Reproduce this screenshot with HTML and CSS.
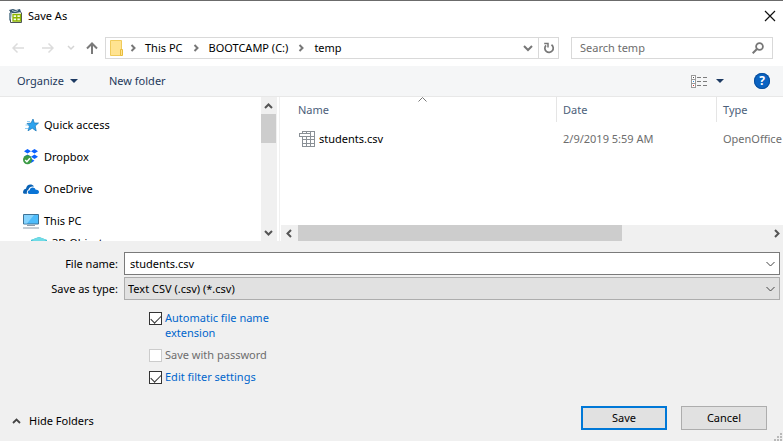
FILE: index.html
```html
<!DOCTYPE html>
<html lang="en">
<head>
<meta charset="utf-8">
<title>Save As</title>
<link rel="stylesheet" href="styles.css">
</head>
<body>
<main class="dialog">
  <header class="titlebar">
    <svg class="app-icon" width="16" height="16" viewBox="0 0 16 16" aria-hidden="true">
      <path d="M2.500 3.500h9.500l1.500 1.500v9.500h-11z" fill="#fff" stroke="#4c5357"/>
      <path d="M1 2l4-1 3 1 4-1 1 3-5 1-5 0z" fill="#33556d"/>
      <path d="M4 2.500l3 1 3-1" fill="none" stroke="#b9cbd6"/>
      <path d="M1 5l3-1-1 7-2 2z" fill="#7d96a5"/>
      <path d="M5 6.500h7.500v6.500H5zM8.750 6.500v6.500M5 9.750h7.500" fill="#f7fce4" stroke="#8db500" stroke-width="1.300"/>
    </svg>
    <h1 class="title">Save As</h1>
    <button class="close" type="button" aria-label="Close">
      <svg width="12" height="12" viewBox="0 0 12 12"><path d="M1 1l10 10M11 1L1 11" fill="none" stroke="#111" stroke-width="1.200"/></svg>
    </button>
  </header>

  <div class="navbar">
    <div class="history">
      <button type="button" class="nav-btn" aria-label="Back" disabled>
        <svg width="12" height="12" viewBox="0 0 12 12"><path d="M12 6H1M5.500 1.500L1 6l4.500 4.500" fill="none" stroke="#dcdcdc" stroke-width="1.500"/></svg>
      </button>
      <button type="button" class="nav-btn" aria-label="Forward" disabled>
        <svg width="12" height="12" viewBox="0 0 12 12"><path d="M0 6h11M6.500 1.500L11 6l-4.500 4.500" fill="none" stroke="#dcdcdc" stroke-width="1.500"/></svg>
      </button>
      <button type="button" class="nav-btn recent" aria-label="Recent locations" disabled>
        <svg width="8" height="6" viewBox="0 0 8 6"><path d="M1 1l3 3 3-3" fill="none" stroke="#d4d4d4" stroke-width="1.500"/></svg>
      </button>
      <button type="button" class="nav-btn" aria-label="Up">
        <svg width="12" height="12" viewBox="0 0 12 12"><path d="M6 12V1.500M1 6.500l5-5 5 5" fill="none" stroke="#7a7a7a" stroke-width="2"/></svg>
      </button>
    </div>
    <div class="address">
      <svg class="folder" width="14" height="16" viewBox="0 0 14 16" aria-hidden="true">
        <path d="M.5.5h11v15h-11z" fill="#ffe391" stroke="#f0cb5b"/>
        <path d="M10.500 9.500h2v6h-2z" fill="#ffe391" stroke="#e9bd3c"/>
      </svg>
      <svg class="sep" width="6" height="8" viewBox="0 0 6 8"><path d="M1.500 1l3 3-3 3" /></svg>
      <a href="#pc">This PC</a>
      <svg class="sep" width="6" height="8" viewBox="0 0 6 8"><path d="M1.500 1l3 3-3 3" /></svg>
      <a href="#c">BOOTCAMP (C:)</a>
      <svg class="sep" width="6" height="8" viewBox="0 0 6 8"><path d="M1.500 1l3 3-3 3" /></svg>
      <a href="#temp">temp</a>
      <button type="button" class="addr-btn drop" aria-label="Previous locations">
        <svg width="10" height="7" viewBox="0 0 10 7"><path d="M1 1l4 4 4-4" fill="none" stroke="#777" stroke-width="2"/></svg>
      </button>
      <button type="button" class="addr-btn refresh" aria-label="Refresh">
        <svg width="12" height="12" viewBox="0 0 12 12"><path d="M8.500 2.800A4.200 4.200 0 1 1 3 3.300" fill="none" stroke="#777" stroke-width="1.700"/><path d="M1.200 1.500H5V5.500" fill="none" stroke="#777" stroke-width="1.500"/></svg>
      </button>
    </div>
    <div class="search">
      <input type="text" placeholder="Search temp" aria-label="Search temp">
      <svg width="12" height="12" viewBox="0 0 12 12" aria-hidden="true"><circle cx="7.500" cy="4.500" r="3.400" fill="none" stroke="#777" stroke-width="1.800"/><path d="M5 7L.7 11.300" stroke="#777" stroke-width="2"/></svg>
    </div>
  </div>

  <div class="toolbar">
    <button type="button" class="tool">Organize
      <svg width="8" height="4" viewBox="0 0 8 4"><path d="M0 0h8L4 4z" fill="#1d3a63"/></svg>
    </button>
    <button type="button" class="tool">New folder</button>
    <button type="button" class="tool view" aria-label="Change view">
      <svg width="16" height="13" viewBox="0 0 16 13" shape-rendering="crispEdges">
        <path d="M.5.500h4v12h-4zM.5 4.500h4M.5 8.500h4" fill="#fff" stroke="#9a9a9a"/>
        <path d="M2 2h1v1H2z" fill="#555"/><path d="M2 6h1v1H2z" fill="#2f8fe0"/><path d="M2 10h1v1H2z" fill="#c33"/>
        <path d="M6 2.500h4M12 2.500h4M6 6.500h4M12 6.500h4M6 10.500h4M12 10.500h4" stroke="#7c7c7c"/>
      </svg>
      <svg width="8" height="4" viewBox="0 0 8 4"><path d="M0 0h8L4 4z" fill="#1d3a63"/></svg>
    </button>
    <button type="button" class="help" aria-label="Help">?</button>
  </div>

  <div class="browser">
    <nav class="places">
      <a href="#quick">
        <svg width="16" height="16" viewBox="0 0 16 16"><path d="M10 2l1.300 4H15.500l-3.300 3 1 5-3.900-2.800L5 13.800l1.400-4.600L4 6.500l4-.4z" fill="#2ea3ee" stroke="#1976b8" stroke-width=".7"/><path d="M4 4.500h3M2.500 8h3M2 11.500h3" stroke="#8fcdf5"/></svg>
        Quick access</a>
      <a href="#dropbox">
        <svg width="16" height="16" viewBox="0 0 16 16"><path d="M4.500 0L8 2.200 4.500 4.500 1 2.200zM11.500 0L15 2.200l-3.500 2.300L8 2.200zM4.500 5.500L8 7.700 4.500 10 1 7.700zM11.500 5.500L15 7.700 11.500 10 8 7.700zM8 9.500l3.500 2.200L8 14z" fill="#0a62ff"/><circle cx="4.500" cy="10.800" r="4.500" fill="#3b9b45"/><path d="M2.200 11l1.700 1.700 3-3.500" fill="none" stroke="#fff" stroke-width="1.500"/></svg>
        Dropbox</a>
      <a href="#onedrive">
        <svg width="16" height="16" viewBox="0 0 16 16"><path d="M0 11.500C0 9 1.500 8 3 7.700 3.500 3.500 8.500 2 11 5.500 7.500 5 6 6.500 5.500 8.500 4 9 3.500 11 4 12.800H2C.8 12.800 0 12.500 0 11.500z" fill="#0a62b5"/><path d="M6.500 13C4 12.500 4.300 9.500 6.700 9.300 7 6 11.500 5.500 12.700 8.700 15 8.400 16 9.500 16 11c0 1.300-1 2-2 2z" fill="#0a74d6"/></svg>
        OneDrive</a>
      <a href="#thispc">
        <svg width="16" height="16" viewBox="0 0 16 16"><path d="M.5 1.500h15v9.500h-15z" fill="#4dbcfb" stroke="#3f7396"/><path d="M1 2h10L4 10.500H1z" fill="#86d3fd"/><path d="M4 12.500h8M0 15h16" stroke="#8d9caa"/></svg>
        This PC</a>
      <a href="#objects" class="child">
        <svg width="16" height="16" viewBox="0 0 16 16"><path d="M8 0l8 3v9l-8 4-8-4V3z" fill="#35b6cb"/><path d="M8 0l8 3-8 3-8-3z" fill="#6fdbe6"/></svg>
        3D Objects</a>
    </nav>
    <div class="vscroll" aria-hidden="true">
      <svg width="9" height="6" viewBox="0 0 9 6"><path d="M1 5l3.500-3.500L8 5"/></svg>
      <div class="vthumb"></div>
      <svg class="end" width="9" height="6" viewBox="0 0 9 6"><path d="M1 1l3.500 3.500L8 1"/></svg>
    </div>
    <section class="files">
      <div class="list">
        <table>
          <colgroup><col class="c-name"><col class="c-date"><col></colgroup>
          <thead><tr>
            <th>Name<svg class="sort" width="9" height="5" viewBox="0 0 9 5"><path d="M.5 4.500l4-4 4 4" fill="none" stroke="#777"/></svg></th>
            <th>Date</th><th>Type</th>
          </tr></thead>
          <tbody><tr>
            <td class="name"><div class="file">
              <svg width="16" height="16" viewBox="0 0 16 16" shape-rendering="crispEdges"><path d="M3.500.5h12v15h-12zM7.500.5v15M11.500.5v15M3.500 5.500h12M3.500 8.500h12M3.500 12.500h12" fill="#fff" stroke="#8a9096"/><path d="M.5 2.500h11v3H.5z" fill="#fff" stroke="#8a9096"/></svg>
              students.csv</div></td>
            <td>2/9/2019 5:59 AM</td><td>OpenOffice</td>
          </tr></tbody>
        </table>
      </div>
      <div class="hscroll" aria-hidden="true">
        <svg width="6" height="9" viewBox="0 0 6 9"><path d="M5 1L1.500 4.500 5 8"/></svg>
        <div class="track"><div class="hthumb"></div></div>
        <svg width="6" height="9" viewBox="0 0 6 9"><path d="M1 1l3.500 3.500L1 8"/></svg>
      </div>
    </section>
  </div>

  <form class="form">
    <div class="fields">
      <label for="fname">File name:</label>
      <div class="combo">
        <input id="fname" type="text" value="students.csv">
        <svg width="9" height="6" viewBox="0 0 9 6"><path d="M.5 1l4 4 4-4"/></svg>
      </div>
      <label for="ftype">Save as type:</label>
      <div class="combo grey">
        <select id="ftype"><option>Text CSV (.csv) (*.csv)</option></select>
        <svg width="9" height="6" viewBox="0 0 9 6"><path d="M.5 1l4 4 4-4"/></svg>
      </div>
    </div>
    <div class="options">
      <label><input type="checkbox" checked><span>Automatic file name extension</span></label>
      <label class="off"><input type="checkbox" disabled><span>Save with password</span></label>
      <label><input type="checkbox" checked><span>Edit filter settings</span></label>
    </div>
    <footer class="footer">
      <button type="button" class="hide">
        <svg width="9" height="6" viewBox="0 0 9 6"><path d="M1 5l3.500-3.500L8 5" fill="none" stroke="#444" stroke-width="1.800"/></svg>
        Hide Folders
      </button>
      <button type="submit" class="push default">Save</button>
      <button type="button" class="push">Cancel</button>
    </footer>
    <svg class="grip" width="8" height="8" viewBox="0 0 8 8" aria-hidden="true"><path d="M6 0h2v2H6zM3 3h2v2H3zM6 3h2v2H6zM0 6h2v2H0zM3 6h2v2H3zM6 6h2v2H6z" fill="#b9b9b9"/></svg>
  </form>
</main>
</body>
</html>
```
FILE: styles.css
```css
* { box-sizing: border-box; }

body {
  margin: 0;
  background: #fff;
  color: #000;
  font: 11px/16px "Segoe UI", "Noto Sans", "Open Sans", sans-serif;
}

button, input, select {
  margin: 0;
  padding: 0;
  border: 0;
  background: none;
  color: inherit;
  font: inherit;
}

a { color: inherit; text-decoration: none; }
svg { display: block; flex: none; }

.dialog {
  display: flex;
  flex-direction: column;
  min-height: 100vh;
  border-top: 1px solid #6b6b6b;
}

.titlebar {
  display: flex;
  align-items: center;
  height: 29px;
  padding: 0 7px 0 8px;
}
.title { flex: 1; margin: 0 0 0 4px; font-size: 11px; font-weight: 400; }

.navbar {
  display: flex;
  align-items: center;
  height: 36px;
  padding: 0 10px 0 12px;
}
.history { display: flex; align-items: center; width: 93px; }
.nav-btn { margin-right: 18px; }
.nav-btn:nth-child(2) { margin-right: 13px; }
.nav-btn.recent { margin-right: 11px; }
.nav-btn:last-child { margin-right: 0; }

.address, .search {
  display: flex;
  align-items: center;
  height: 22px;
  border: 1px solid #d9d9d9;
}
.address { flex: 1; min-width: 0; padding-left: 4px; }
.folder { margin-right: 6px; }
.sep { margin: 0 10px; }
.folder + .sep { margin-left: 0; margin-right: 9px; }
.sep path { fill: none; stroke: #777; stroke-width: 2; }
.addr-btn { display: flex; align-items: center; justify-content: center; width: 20px; height: 20px; }
.drop { margin-left: auto; }
.refresh { border-left: 1px solid #d9d9d9; }

.search { width: 202px; margin-left: 12px; padding: 0 8px; }
.search input { flex: 1; min-width: 0; outline: 0; }
.search input::placeholder { color: #6d6d6d; opacity: 1; }

.toolbar {
  display: flex;
  align-items: center;
  height: 31px;
  padding: 0 13px 0 17px;
  border-bottom: 1px solid #e8e8e8;
  background: #f5f6f7;
  color: #1e395b;
}
.tool { display: flex; align-items: center; gap: 6px; margin-right: 31px; }
.view { gap: 9px; margin: 0 30px 0 auto; }
.help {
  width: 16px;
  height: 16px;
  border-radius: 50%;
  background: #0a63c2;
  box-shadow: 0 0 0 1px #0a4f9c inset;
  color: #fff;
  font-size: 12px;
  font-weight: 700;
  line-height: 16px;
}

.browser { display: flex; height: 144px; }
.places { width: 261px; padding: 12px 0 0 23px; overflow: hidden; }
.places a { display: flex; align-items: center; gap: 5px; height: 32px; }
.places a.child { align-items: flex-start; height: 16px; padding-left: 8px; line-height: 12px; }

.vscroll {
  display: flex;
  flex-direction: column;
  align-items: center;
  width: 16px;
  padding: 6px 1px 5px 0;
  background: #f0f0f0;
}
.vscroll path, .hscroll path { fill: none; stroke: #555; stroke-width: 2; }
.vthumb { width: 15px; height: 29px; margin-top: 5px; background: #cdcdcd; }
.vscroll .end { margin-top: auto; }

.files {
  display: flex;
  flex: 1;
  flex-direction: column;
  min-width: 0;
  margin-left: 2px;
  border-left: 1px solid #f0f0f0;
}
.list { flex: 1; overflow: hidden; }
.list table { width: 100%; table-layout: fixed; border-collapse: separate; border-spacing: 0; }
.c-name { width: 277px; }
.c-date { width: 160px; }
.list th {
  position: relative;
  height: 25px;
  padding: 0 0 0 6px;
  border-right: 1px solid #e5e5e5;
  color: #4c607a;
  font-weight: 400;
  text-align: left;
}
.list th:first-child { padding-left: 18px; }
.list th:last-child { border-right: 0; }
.sort { position: absolute; top: 0; left: 50%; }
.list td { height: 34px; padding: 0 0 0 6px; color: #6d6d6d; white-space: nowrap; }
.list td.name { padding-left: 19px; color: #000; }
.file { display: flex; align-items: center; gap: 4px; }

.hscroll {
  display: flex;
  align-items: center;
  height: 16px;
  margin-left: 1px;
  padding: 0 3px 0 5px;
  background: #f0f0f0;
}
.track { flex: 1; margin: 0 6px; }
.hthumb { width: 69%; height: 16px; background: #cdcdcd; }

.form {
  position: relative;
  display: flex;
  flex: 1;
  flex-direction: column;
  background: #f0f0f0;
}
.fields {
  display: grid;
  grid-template-columns: 118px 1fr;
  gap: 2px 6px;
  align-items: center;
  padding: 11px 3px 0 0;
}
.fields label { text-align: right; }
.combo {
  display: flex;
  align-items: center;
  height: 23px;
  padding: 0 4px 0 5px;
  border: 1px solid #7a7a7a;
  background: #fff;
}
.combo.grey { padding-left: 3px; border-color: #adadad; background: #e1e1e1; }
.combo input, .combo select { flex: 1; min-width: 0; appearance: none; outline: 0; }
.combo path { fill: none; stroke: #444; stroke-width: 1px; }

.options {
  display: flex;
  flex-direction: column;
  gap: 7px;
  width: 128px;
  margin: 10px 0 0 149px;
  color: #0066cc;
  line-height: 15px;
}
.options label { display: flex; gap: 3px; }
.options .off { color: #6d6d6d; white-space: nowrap; }
.options input {
  flex: none;
  width: 13px;
  height: 13px;
  margin-top: 2px;
  border: 1px solid #333;
  background: #fff;
  appearance: none;
}
.options input:checked::before {
  content: "";
  display: block;
  width: 9px;
  height: 5px;
  margin: 2px 1px;
  border: solid #333;
  border-width: 0 0 1px 1px;
  transform: rotate(-45deg);
}
.options input:disabled { border-color: #ccc; }

.footer {
  display: flex;
  align-items: center;
  gap: 14px;
  margin-top: auto;
  padding: 0 16px 11px 12px;
}
.hide { display: flex; align-items: center; gap: 8px; margin: 5px auto 0 0; }
.push { width: 86px; height: 24px; border: 1px solid #adadad; background: #e1e1e1; }
.push.default { border: 2px solid #0078d7; }
.grip { position: absolute; right: 1px; bottom: 0; }
```
